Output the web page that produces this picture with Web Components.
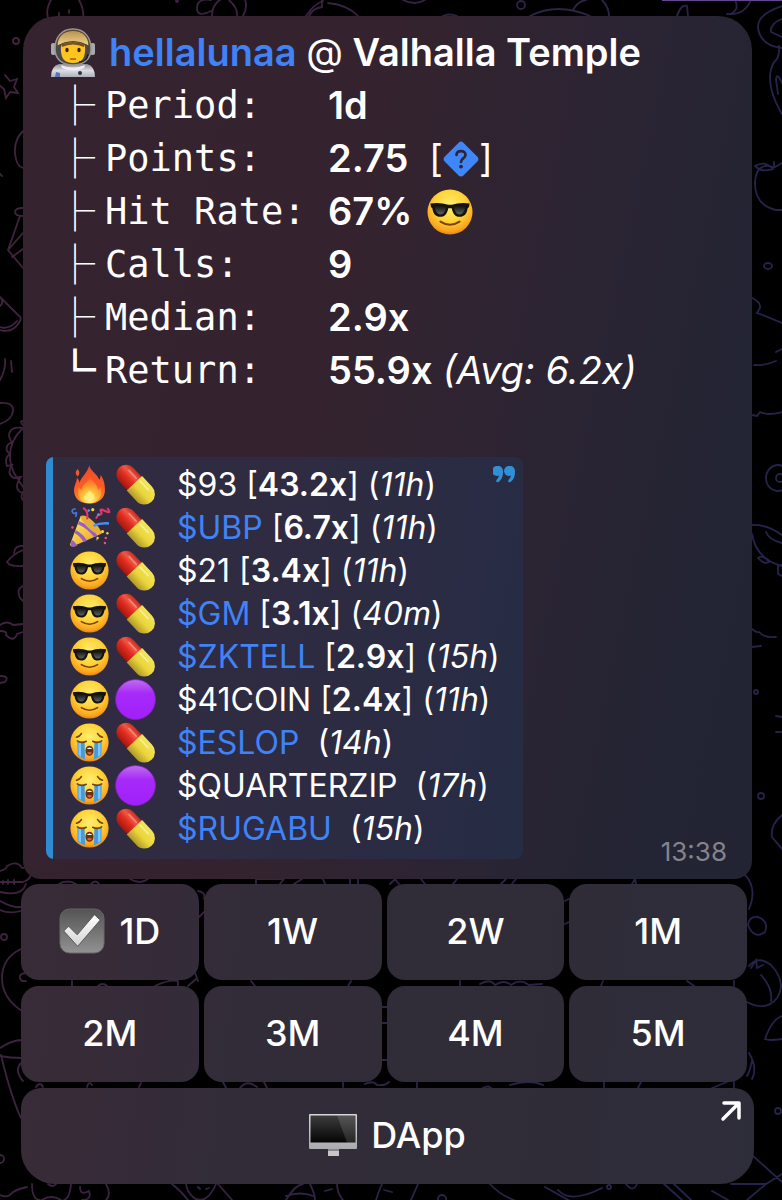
<!DOCTYPE html>
<html lang="en">
<head>
<meta charset="utf-8">
<meta name="viewport" content="width=device-width, initial-scale=1">
<title>Valhalla Temple</title>
<style>
  html { background:#000 }
  body { margin:0; color:#fff; font-family:"Inter","Liberation Sans",sans-serif }
</style>
</head>
<body>
<chat-screen>
  <chat-wallpaper slot="wallpaper"></chat-wallpaper>

  <message-bubble time="13:38">
	<user-title slot="title" name="hellalunaa" group="Valhalla Temple"></user-title>

	<stat-row label="Period:">1d</stat-row>
	<stat-row label="Points:">2.75<span slot="extra">&nbsp;[<emoji-icon name="help"></emoji-icon>]</span></stat-row>
	<stat-row label="Hit Rate:">67%<emoji-icon slot="extra" name="cool" style="--size:46px"></emoji-icon></stat-row>
	<stat-row label="Calls:">9</stat-row>
	<stat-row label="Median:">2.9x</stat-row>
	<stat-row label="Return:" last>55.9x<em slot="extra">(Avg: 6.2x)</em></stat-row>

	<call-quote slot="quote">
	  <call-row mood="fire" kind="pill" ticker="$93" gain="43.2x" age="11h"></call-row>
	  <call-row mood="party" kind="pill" ticker="$UBP" gain="6.7x" age="11h" link></call-row>
	  <call-row mood="cool" kind="pill" ticker="$21" gain="3.4x" age="11h"></call-row>
	  <call-row mood="cool" kind="pill" ticker="$GM" gain="3.1x" age="40m" link></call-row>
	  <call-row mood="cool" kind="pill" ticker="$ZKTELL" gain="2.9x" age="15h" link></call-row>
	  <call-row mood="cool" kind="circle" ticker="$41COIN" gain="2.4x" age="11h"></call-row>
	  <call-row mood="cry" kind="pill" ticker="$ESLOP" age="14h" link></call-row>
	  <call-row mood="cry" kind="circle" ticker="$QUARTERZIP" age="17h"></call-row>
	  <call-row mood="cry" kind="pill" ticker="$RUGABU" age="15h" link></call-row>
	</call-quote>
  </message-bubble>

  <inline-keyboard>
	<key-button><emoji-icon name="check" style="--size:46px"></emoji-icon>1D</key-button>
	<key-button>1W</key-button>
	<key-button>2W</key-button>
	<key-button>1M</key-button>
	<key-button>2M</key-button>
	<key-button>3M</key-button>
	<key-button>4M</key-button>
	<key-button>5M</key-button>
	<key-button slot="wide" href="#dapp"><emoji-icon name="desktop" style="--size:48px"></emoji-icon>DApp</key-button>
  </inline-keyboard>
</chat-screen>

<script>
// ===== Icons =====
const FACE = `
  <defs>
	<radialGradient id="face" cx=".5" cy=".36" r=".66">
	  <stop offset="0" stop-color="#ffee70"/><stop offset=".5" stop-color="#ffd53c"/>
	  <stop offset=".85" stop-color="#fba51c"/><stop offset="1" stop-color="#e07c12"/>
	</radialGradient>
	<linearGradient id="lens" x2="0" y2="1"><stop offset="0" stop-color="#111"/><stop offset="1" stop-color="#5a6260"/></linearGradient>
  </defs>
  <circle cx="24" cy="24" r="23.500" fill="url(#face)"/>`;

const ICONS = {
  cool: `${FACE}
	<path d="M3.500 15Q14 13.500 22 16.500h4Q34 13.500 44.500 15l-.8 4-1.200.8C41.500 26 39 29 34 29c-5 0-7-3.500-8.200-9h-3.600C21 25.500 19 29 14 29c-5 0-7.500-3-8.500-9.200L4.300 19Z" fill="#16120c"/>
	<path d="M8 18q6-1.500 12 1-1.500 7.500-6 7.500-5 0-6-8.500ZM40 18q-6-1.500-12 1 1.500 7.500 6 7.500 5 0 6-8.500Z" fill="url(#lens)"/>
	<path d="M14 34q10 6.500 20 0" fill="none" stroke="#7c4208" stroke-width="2" stroke-linecap="round"/>`,
  cry: `${FACE}
	<path d="M9 23h9l.5 21.500Q14 43 9.500 40ZM30 23h9l-.5 17Q34 43 29.500 44.500Z" fill="#459be0"/>
	<path d="M10.500 24h3v17.500l-3-2ZM34.500 24h3v15.500l-3 2Z" fill="#80c8f5"/>
	<path d="M9 22q5 3.500 11 .5M28 22.500q6 3 11-.5M8 17.500q4-1 6-4.500M40 17.500q-4-1-6-4.500" fill="none" stroke="#754106" stroke-width="2" stroke-linecap="round"/>
	<path d="M19 34c0-8 10-8 10 0s-10 8.500-10 0Z" fill="#6b3208"/>
	<path d="M20.500 32q3.500-4 7 0Z" fill="#fff"/><path d="M20.800 37q3.200-2.500 6.400 0-3 3.500-6.400 0Z" fill="#e65b57"/>`,
  fire: `
	<defs>
	  <linearGradient id="fl" x2="0" y2="1"><stop offset="0" stop-color="#f04a2a"/><stop offset=".55" stop-color="#fb5a25"/><stop offset="1" stop-color="#ff8a22"/></linearGradient>
	  <radialGradient id="glow" cx=".5" cy=".9" r=".8"><stop offset="0" stop-color="#fff48a"/><stop offset=".45" stop-color="#ffc038"/><stop offset="1" stop-color="#fb5f25"/></radialGradient>
	</defs>
	<path d="M24 0c-.5 6 9 10 12 18 1.500-1.500 2-4 1.500-6 4.500 6 5.500 12 5.500 19 0 10-8 16.500-19.500 16.500S5 41 5 31.500C5 25 8 22 8.500 16c2 1.500 3 3.500 3.500 6 1-7 9-11 12-22Z" fill="url(#fl)"/>
	<path d="M9.500 14q-5-4 0-9 4 5 0 9Z" fill="#f4572a"/>
	<path d="M25 13c0 6 9 10 9.500 17 1.500 0 2.500-2 3-4 4.500 12-3 21-14 21S7 38 11 27c1 2 2 3 3.500 3.500C15 23 24 21 25 13Z" fill="url(#glow)"/>
	<path d="M24 31c4 4 7 6 6 10-1 5-12 5-13 0-.5-4 4-5 7-10Z" fill="#fff38a" opacity=".7"/>`,
  party: `
	<defs><linearGradient id="cone" x2="1" y2="1"><stop offset="0" stop-color="#fff066"/><stop offset="1" stop-color="#e69d20"/></linearGradient></defs>
	<path d="M13 10 0 45q0 3 4 2l34-15Q28 12 13 10Z" fill="url(#cone)"/>
	<path d="M11 16q14 6 23 18l-4 2Q21 25 10 20ZM7 27q9 5 14 13l-4 2q-5-8-11-11ZM2 39q5 3 7 7l-4 2q-4 0-4-3Z" fill="#9b5bc8"/>
	<path d="M13 10q5-3 15 6t11 16q-8 1-17-8T13 10Z" fill="#e4b035"/>
	<path d="M16 0q7 3 5 14M32 13q2-5 5-5t1-4 6 0 2-4" fill="none" stroke="#e8366a" stroke-width="2.500"/>
	<path d="M29 22q8-4 19-3" fill="none" stroke="#4a8df0" stroke-width="3"/>
	<path d="M7 1q-6 1-4 4t4 1 0 5" fill="none" stroke="#4678de" stroke-width="2"/>
	<g fill="#ffcc3d"><circle cx="28" cy="2" r="2"/><circle cx="40" cy="29" r="2"/><circle cx="46" cy="31" r="1.500"/><circle cx="34" cy="37" r="1.500"/></g>
	<g fill="#eb4d87"><circle cx="3" cy="24" r="1.500"/><circle cx="44" cy="37" r="1.500"/><circle cx="43" cy="43" r="1.500"/></g>
	<g fill="#45a8ef"><circle cx="23" cy="3" r="1.500"/><circle cx="35" cy="8" r="1.500"/><circle cx="33" cy="39" r="1"/></g>`,
  pill: `
	<defs>
	  <linearGradient id="red" x2="0" y2="1"><stop offset="0" stop-color="#c42c22"/><stop offset=".3" stop-color="#ee5a45"/><stop offset=".55" stop-color="#e32e21"/><stop offset="1" stop-color="#a5170d"/></linearGradient>
	  <linearGradient id="yel" x2="0" y2="1"><stop offset="0" stop-color="#f3e55c"/><stop offset=".55" stop-color="#ead53a"/><stop offset="1" stop-color="#b0982a"/></linearGradient>
	</defs>
	<g transform="rotate(47 24 24)">
	  <path d="M24 12H7a12 12 0 0 0 0 24h17Z" fill="url(#red)"/>
	  <path d="M22 11h18a13 13 0 0 1 0 26H22Z" fill="url(#yel)"/>
	  <path d="M25 17h14" stroke="#fffbd0" stroke-width="2" stroke-linecap="round" opacity=".6"/>
	  <path d="M6 18h13" stroke="#ffc0ad" stroke-width="2" stroke-linecap="round" opacity=".5"/>
	</g>`,
  circle: `
	<defs><linearGradient id="dot" x2="0" y2="1"><stop offset="0" stop-color="#bf6fee"/><stop offset=".35" stop-color="#a72af8"/><stop offset="1" stop-color="#a020fa"/></linearGradient></defs>
	<circle cx="24" cy="24" r="24.500" fill="url(#dot)" stroke="#8420bd"/>`,
  help: `
	<path d="M20.500 2.500q3.500-3.500 7 0l18 18q3.500 3.500 0 7l-18 18q-3.500 3.500-7 0l-18-18q-3.500-3.500 0-7Z" fill="#3f86f8"/>
	<path d="M18 18.500c.5-6.500 12-6.500 12 0 0 5-6 4.500-6 9.500" fill="none" stroke="#2e2433" stroke-width="3.600" stroke-linecap="round"/><circle cx="24" cy="34" r="2.500" fill="#2e2433"/>`,
  check: `
	<defs>
	  <linearGradient id="box" x2="0" y2="1"><stop offset="0" stop-color="#545454"/><stop offset="1" stop-color="#929292"/></linearGradient>
	  <linearGradient id="tick" x2="0" y2="1"><stop offset="0" stop-color="#fff"/><stop offset="1" stop-color="#d4d4d4"/></linearGradient>
	</defs>
	<rect x="1" y="1" width="46" height="46" rx="10" fill="url(#box)" stroke="#666"/>
	<path d="m5 24 5-5 9 9L37 7l6 5.500L19.500 40Z" fill="url(#tick)" stroke="#444" stroke-width=".8"/>`,
  desktop: `
	<defs>
	  <linearGradient id="scr" x2="0" y2="1"><stop offset="0" stop-color="#3c3c3c"/><stop offset="1" stop-color="#050505"/></linearGradient>
	  <linearGradient id="alu" x2="0" y2="1"><stop offset="0" stop-color="#d8d8dc"/><stop offset="1" stop-color="#a9a9ae"/></linearGradient>
	</defs>
	<path d="M19 37h11v8H19Z" fill="#c5c5ca"/><path d="M19 38h11v2H19Z" fill="#85858a"/>
	<rect y="3" width="48" height="35" rx="1" fill="url(#alu)"/>
	<rect x="1.500" y="4.500" width="45" height="27" fill="url(#scr)"/>
	<path d="M28 4.500h18.500v27H38Z" fill="#fff" opacity=".13"/>`,
  astronaut: `
	<defs>
	  <linearGradient id="suit" x2="0" y2="1"><stop offset="0" stop-color="#8d8e94"/><stop offset=".5" stop-color="#dcdce4"/><stop offset="1" stop-color="#b0b0ba"/></linearGradient>
	  <linearGradient id="visor" x2="0" y2="1"><stop offset="0" stop-color="#b8904f"/><stop offset="1" stop-color="#f0d78e"/></linearGradient>
	</defs>
	<path d="M2 48q0-11 8-13h28q8 2 8 13Z" fill="url(#suit)"/>
	<rect x="2" y="14" width="5" height="12" rx="2" fill="#a8a8ad"/><rect x="41" y="14" width="5" height="12" rx="2" fill="#a8a8ad"/>
	<path d="M24 0C12 0 6 9 6 20c0 10 7 16 18 16s18-6 18-16C42 9 36 0 24 0Z" fill="#4b484c" stroke="#9c9794" stroke-width="1.500"/>
	<path d="M12 16q12-6 24 0c1 13-3 18-12 18s-13-5-12-18Z" fill="#ffc51e"/>
	<path d="M24 1.500C14 1.500 8 8 8 17q16-9 32 0c0-9-6-15.500-16-15.500Z" fill="url(#visor)" stroke="#5b4626"/>
	<path d="M12 15.500q12-5 24 0l-1 2.500q-11-5-22 0Z" fill="#75502b"/>
	<ellipse cx="18" cy="21" rx="1.700" ry="2.200" fill="#3b220e"/><ellipse cx="30" cy="21" rx="1.700" ry="2.200" fill="#3b220e"/>
	<path d="M21.500 30h5" stroke="#a55718" stroke-width="1.500" stroke-linecap="round"/>
	<path d="M39 25q-1 8-9 8" fill="none" stroke="#202020" stroke-width="1.500"/>
	<path d="M12 36q12 5 24 0l-1 3q-11 5-22 0Z" fill="#efeff3"/>
	<circle cx="31" cy="44" r="2" fill="#32343c"/><path d="M7 43l4 1v4H6Z" fill="#5476bf"/>`
};

class EmojiIcon extends HTMLElement {
  connectedCallback() {
	this.attachShadow({ mode: "open" }).innerHTML = `
	  <style>
		:host { display:inline-block; width:var(--size, 38px); height:var(--size, 38px); flex:none; vertical-align:middle }
		svg { display:block; width:100%; height:100%; overflow:visible }
	  </style>
	  <svg viewBox="0 0 48 48" aria-hidden="true">${ICONS[this.getAttribute("name")]}</svg>`;
  }
}

// ===== Wallpaper: line doodles behind everything =====
class ChatWallpaper extends HTMLElement {
  connectedCallback() {
	this.attachShadow({ mode: "open" }).innerHTML = `
	  <style>
		:host { position:absolute; inset:0; z-index:-1; overflow:hidden }
		:host::before { content:""; position:absolute; top:0; right:0; width:120px; height:1px; background:#64458f }
		svg { display:block; width:100%; height:100% }
	  </style>
	  <svg viewBox="0 0 782 1200" preserveAspectRatio="xMidYMin slice" fill="none" stroke="url(#ink)" stroke-width="1.800" stroke-linecap="round" aria-hidden="true">
		<defs>
		  <linearGradient id="ink" gradientUnits="userSpaceOnUse" x1="0" y1="0" x2="782" y2="100">
			<stop offset="0" stop-color="#42233e"/><stop offset=".4" stop-color="#372341"/><stop offset="1" stop-color="#25234a"/>
		  </linearGradient>
		</defs>
		<!-- top edge -->
		<path d="M51 0q-8 14 1 25h30q4-12-3-25M59 13v3M69 10v3M211 0q-14-2-14 8t14 3M220 0q-8 5-8 16M229 0q9 8 8 16M245 0q3 7-2 16M306 16q8-12 17-15M322 0v7q-9 1-13 9M328 3q20 2 30 13"/>
		<path d="M403 0q12 6 22 0M443 16q6-3 14 0M530 16q27-14 60 0M573 10q5-9 13-10M602 0q7 7 7 16M677 16q4-12 10-10l1 10M730 14q10-4 5-14M727 14q17 2 24-14"/>
		<circle cx="521" cy="5" r="4"/><circle cx="177" cy="1" r="1"/>
		<!-- left edge -->
		<circle cx="16" cy="41" r="3"/><path d="m5 75 5 6 7-2-3 8 4 6-8-1-4 6-2-9-5-4M23 131q-9 9-8 22t8 15M0 174l2 2"/>
		<path d="M23 208q-8 0-8 4t8 4M20 216 8 250l15 18M8 250l15-17M12 257l11-8M0 297l18 18q4 2 2 6-7 13-20 9M17 321Q9 330 0 327M0 306q4-3 1-8M5 359q1 10-5 21M11 361l1 11M0 403q14-1 13 8T0 424"/>
		<path d="M23 425q-4-4 0-4M23 428q-14-2-14 8 2 6 3 6-7 3-5 9l3 3q-6 4-3 12l5-1q-6 9 2 13l7-1q-10 14 5 17M22 429Q3 448 14 473l9 14M23 500q-3-3 0-8M23 546q-8-1-9 7M23 550q-10 4-16 12 3 5 16 4M23 586q-7 3-3 12l3 3M0 625q8-5 13 0l10-1M0 631q8 0 6 4 8 8 11-1l6-2M0 676q10 0 5 6l-5 1"/>
		<path d="M0 871q7-2 7-5 10-6 15 2 8-2 9 6-1 6-8 8H0M3 881v3M8 880v4M14 880v4M0 892q22 5 26-8M0 901q18 10 26 4M0 910q9 4 21 1"/>
		<circle cx="4" cy="937" r="3"/><path d="M21 949Q2 958 2 978t20 33M25 973q-6 1-5 5t6 3"/>
		<path d="M0 1048q12-8 22-8M0 1056q10 2 22 2M1 1055q10 42 20 63M21 1063q-7 7 2 18"/><circle cx="0" cy="1159" r="4"/>
		<!-- right edge -->
		<path d="M782 6q-25 8-24 22 3 18 24 20M782 19q-12 4-11 13l11 5M779 46q1 12-5 16-11 20 8 52M782 83q-5-11-6-4l2 15M773 167q-16-5-18 14-1 24 21 29h6M774 167v-5M755 166q10-6 18 3-11 4-18-3M775 167l7-4"/>
		<ellipse cx="768" cy="266" rx="4" ry="3"/><path d="M752 298q9 4 8 10l-3 5 3 1 22 9M754 365q10 1 22-4M776 352l6-3M752 415l5 1 3-4q7 4 22 0"/>
		<ellipse cx="778" cy="478" rx="12" ry="13"/><circle cx="780" cy="478" r="4"/><path d="M752 525q14-1 30 10M752 534q4 25 30 32M766 532q3 8 16 11M758 558q5-4 11 4-5 3-11-4M782 565l-4 1v8l4 2M752 629q5 4 7 3 5 6 17 5M752 647l9-1M776 716l6 1M776 732h5"/>
		<circle cx="756" cy="692" r="2"/><circle cx="761" cy="796" r="3"/><path d="M782 815q-12 10-10 22l10 12M744 874q14 13 5 35M748 925q1-9 10-8 11 4 7 15-11 8-17-7M749 966q9-11 22-1 16 17 6 33-11 14-30 4M751 968l5-8 1 8 6-3M761 975q12 13 10 26M782 1016q-10 3-17 23 4 2 17 0M749 1053q9 15 3 26M752 1061q-2 10-5 15"/>
		<circle cx="778" cy="1111" r="3"/>
		<!-- between the keys -->
		<path d="M59 884q8-5 17 0M91 884q5-5 8 0M130 879q10 6 18 0M198 891q8 1 6 8M199 917l5-5M198 981l-3-8M256 884v-5h28l-4 5M294 884l8-5M325 884l-2-5M350 884v-5M358 884v-5M390 884l5-5 4 5M425 884l-4-5M453 884l4-5M501 884l5-5M512 884l4-5M632 884l3-5 1 5"/>
		<path d="M72 986v-5M98 986q5-4 9 0M155 986q14-7 23-5v5M188 986l8-7M251 981l4 5M351 981l-3 5M460 981v5M480 984q10-6 15 1 9-6 16 0 9-7 18 0l13-1M603 981l-2 5M687 981l7 5M734 981v5M382 1007h5M382 1023h5M382 1060h5M565 901l4-2M565 924l4-2"/>
		<path d="M36 1087q4-6 7 0M87 1087q2-7 5-2M141 1083l-2 4M223 1082l3 6M240 1088q7-9 17-1M264 1082l3 6M343 1082v5M365 1084q8-4 12 1 8 1 12-3M417 1082v6M483 1088q5-3 8 0M510 1085q20-6 33 0M604 1082v5M638 1088l3-6M712 1088l15-6M734 1082v6"/>
		<!-- bottom edge -->
		<path d="M0 1195q8 3 11-1t16-7M32 1184q0 16 8 16M71 1184q-1 14-7 16M42 1200q9-6 19 0M48 1184q5 4 8 0M80 1187q0 9 9 4 3 9-7 9M106 1184q6 10 0 16M172 1184q10 8 16 16M186 1184q1 8 8 14 13 7 22-14M198 1187l2 2M206 1189l3-1M218 1184l14 16M286 1200q9-15 17-16M310 1184q5 10 5 16M286 1196q15-5 27 0M337 1184q0 9 6 16M382 1184q-4 9-6 16M325 1191l7-2M384 1190l8 2M411 1200l7-16M490 1184q10 11 24 16M545 1187l25 14M558 1190q12 14 44-2M664 1184l18 16M674 1184l17 16M712 1191l16 9M753 1156l29 26M731 1184l35 0 16-10M766 1184l-19 16"/>
		<circle cx="442" cy="1199" r="4"/><circle cx="609" cy="1187" r="2"/><path d="M626 1184q7 9 11 0"/>
	  </svg>`;
  }
}

// ===== Screen =====
class ChatScreen extends HTMLElement {
  connectedCallback() {
	this.attachShadow({ mode: "open" }).innerHTML = `
	  <style>
		:host { display:block; position:relative; z-index:0; box-sizing:border-box; min-height:100vh; padding:16px 28px 16px 21px }
		main { display:flex; flex-direction:column; gap:5px }
	  </style>
	  <slot name="wallpaper"></slot>
	  <main><slot></slot></main>`;
  }
}

class MessageBubble extends HTMLElement {
  connectedCallback() {
	this.attachShadow({ mode: "open" }).innerHTML = `
	  <style>
		:host {
		  display:block; margin:0 2px; padding:10px 25px 14px 23px;
		  border-radius:34px 34px 18px 18px;
		  background:linear-gradient(102deg, #35232f 0%, #34232f 42%, #2b2433 68%, #232434 88%, #222333 100%);
		}
		.stats { margin-bottom:60px }
		.bottom { display:flex; align-items:flex-end; justify-content:space-between; gap:16px }
		time { font-size:26px; line-height:26px; color:#85838e }
	  </style>
	  <article>
		<slot name="title"></slot>
		<div class="stats"><slot></slot></div>
		<div class="bottom">
		  <slot name="quote"></slot>
		  <time>${this.getAttribute("time")}</time>
		</div>
	  </article>`;
  }
}

class UserTitle extends HTMLElement {
  connectedCallback() {
	this.attachShadow({ mode: "open" }).innerHTML = `
	  <style>
		:host { display:block }
		h1 { display:flex; align-items:center; gap:12px; margin:0; padding-left:3px; font-size:38px; line-height:53px; font-weight:600; white-space:nowrap }
		a { color:#3f83f7; text-decoration:none }
		i { font-style:normal; font-weight:400 }
	  </style>
	  <h1>
		<emoji-icon name="astronaut" style="--size:48px"></emoji-icon>
		<span><a href="#user">${this.getAttribute("name")}</a> <i>@</i> ${this.getAttribute("group")}</span>
	  </h1>`;
  }
}

class StatRow extends HTMLElement {
  connectedCallback() {
	const branch = this.hasAttribute("last") ? "└" : "├";
	this.attachShadow({ mode: "open" }).innerHTML = `
	  <style>
		:host { display:grid; grid-template-columns:40px 233px 1fr; padding-left:9px; height:53px; line-height:53px; font-size:38px; white-space:nowrap }
		.branch { font-family:"Noto Sans CJK SC",sans-serif; font-size:40px; line-height:48px }
		:host([last]) .branch { -webkit-text-stroke:2px #fff }
		.label { padding-left:10px; font-family:"DejaVu Sans Mono",monospace; font-size:37px }
		.value { display:flex; align-items:center; gap:10px }
		b { font-weight:600 }
		::slotted(span) { --size:36px; display:inline-flex; align-items:center }
		::slotted(emoji-icon) { margin-left:5px }
	  </style>
	  <span class="branch">${branch}</span>
	  <span class="label">${this.getAttribute("label")}</span>
	  <span class="value"><b><slot></slot></b><slot name="extra"></slot></span>`;
  }
}

// ===== Quote with the list of calls =====
class CallQuote extends HTMLElement {
  connectedCallback() {
	this.attachShadow({ mode: "open" }).innerHTML = `
	  <style>
		:host { display:block; position:relative; margin-bottom:6px; border-radius:8px; overflow:hidden; background:linear-gradient(100deg, #322b40, #2e2b42 50%, #262c44 95%) }
		blockquote { margin:0; padding:6px 23px 9px 17px; border-left:7px solid #318bd0 }
		svg { position:absolute; top:9px; right:8px; width:22px; height:17px }
	  </style>
	  <blockquote><slot></slot></blockquote>
	  <svg viewBox="0 0 22 17" fill="#318fd6" aria-hidden="true">
		<path d="M5 0a5 5 0 1 0 1 9.500Q5.500 12 3.500 14C2.500 15.500 4 17 5.500 16 9 13.500 10 10 10 5.500 10 2 8 0 5 0ZM17 0a5 5 0 1 0 1 9.500q-.5 2.500-2.500 4.500c-1 1.500.5 3 2 2 3.500-2.500 4.500-6 4.500-10.500C22 2 20 0 17 0Z"/>
	  </svg>`;
  }
}

class CallRow extends HTMLElement {
  connectedCallback() {
	const ticker = this.getAttribute("ticker");
	const gain = this.getAttribute("gain");
	const name = this.hasAttribute("link") ? `<a href="#token">${ticker}</a>` : ticker;
	this.attachShadow({ mode: "open" }).innerHTML = `
	  <style>
		:host { display:flex; align-items:center; gap:7px; height:43px; font-size:32px; line-height:43px; white-space:nowrap }
		emoji-icon { --size:39px }
		p { margin:0 0 0 15px }
		a { color:#3f83f7; text-decoration:none }
		b { font-weight:600 }
	  </style>
	  <emoji-icon name="${this.getAttribute("mood")}"></emoji-icon>
	  <emoji-icon name="${this.getAttribute("kind")}"></emoji-icon>
	  <p>${name} ${gain ? `[<b>${gain}</b>]` : "&nbsp;"}${gain ? " " : ""}(<em>${this.getAttribute("age")}</em>)</p>`;
  }
}

// ===== Keyboard =====
class InlineKeyboard extends HTMLElement {
  connectedCallback() {
	this.attachShadow({ mode: "open" }).innerHTML = `
	  <style>
		:host { display:flex; flex-direction:column; gap:6px }
		.keys { display:grid; grid-template-columns:repeat(4, 1fr); gap:6px 5px; margin-right:7px }
		::slotted([slot="wide"]) { --radius:20px 20px 34px 34px }
	  </style>
	  <div class="keys"><slot></slot></div>
	  <slot name="wide"></slot>`;
  }
}

class KeyButton extends HTMLElement {
  connectedCallback() {
	const href = this.getAttribute("href");
	const tag = href ? "a" : "button";
	this.attachShadow({ mode: "open" }).innerHTML = `
	  <style>
		:host { display:block; position:relative }
		button, a {
		  display:flex; align-items:center; justify-content:center; gap:14px;
		  box-sizing:border-box; width:100%; height:96px; margin:0; padding:0 0 2px; border:0;
		  border-radius:var(--radius, 18px); color:#fff; cursor:pointer; text-decoration:none;
		  font:500 36px/44px "Inter","Liberation Sans",sans-serif;
		  background:linear-gradient(97deg, #3a2b38 0%, #382b38 22%, #322c39 40%, #302c38 65%, #2d2d39 100%) fixed;
		}
		svg { position:absolute; top:12px; right:12px; width:22px; height:22px }
	  </style>
	  <${tag} ${href ? `href="${href}"` : `type="button"`}><slot></slot></${tag}>
	  ${href ? `<svg viewBox="0 0 22 22" fill="none" stroke="#fff" stroke-width="3.500" stroke-linecap="round" stroke-linejoin="round" aria-hidden="true"><path d="M4 3h15v15M19 3 3 19"/></svg>` : ""}`;
  }
}

customElements.define("emoji-icon", EmojiIcon);
customElements.define("chat-wallpaper", ChatWallpaper);
customElements.define("chat-screen", ChatScreen);
customElements.define("message-bubble", MessageBubble);
customElements.define("user-title", UserTitle);
customElements.define("stat-row", StatRow);
customElements.define("call-quote", CallQuote);
customElements.define("call-row", CallRow);
customElements.define("inline-keyboard", InlineKeyboard);
customElements.define("key-button", KeyButton);
</script>
</body>
</html>
